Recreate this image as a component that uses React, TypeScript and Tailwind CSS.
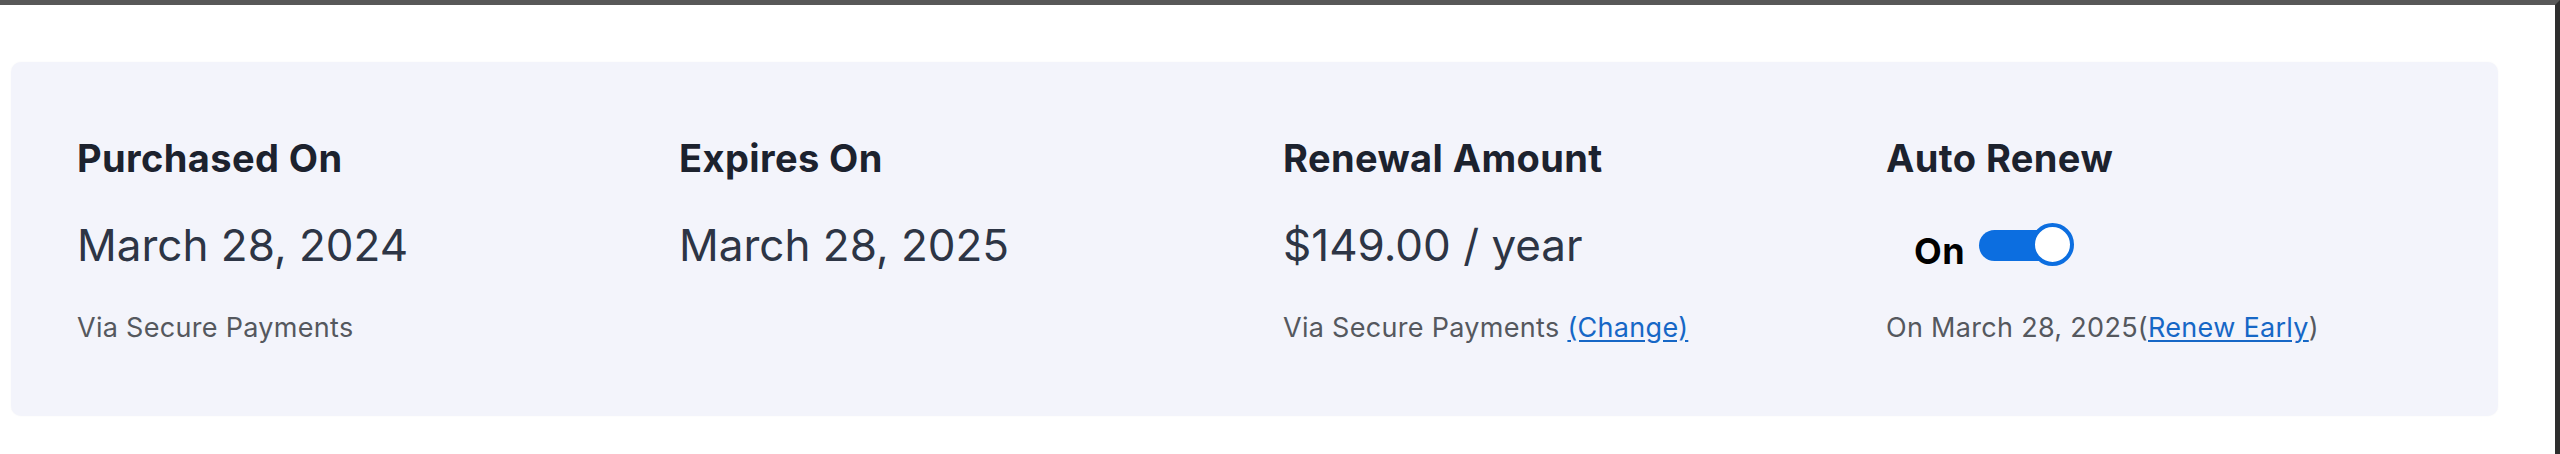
import React from "react";

const font = { fontFamily: "Inter, 'Noto Sans', sans-serif" };

function Heading({ children }: { children: React.ReactNode }) {
  return (
    <div className="text-[38px] leading-[38px] font-bold tracking-[0.4px] text-[#1c222e]">{children}</div>
  );
}

function Value({ children }: { children: React.ReactNode }) {
  return (
    <div className="mt-[46px] text-[44px] leading-[44px] font-normal text-[#2d3545]">{children}</div>
  );
}

function Sub({ children }: { children: React.ReactNode }) {
  return (
    <div className="mt-[47px] text-[27px] leading-[27px] tracking-[0.3px] text-[#55585e]">{children}</div>
  );
}

function Toggle() {
  return (
    <div className="relative h-[31px] w-[85px] rounded-full bg-[#0c6ee0]">
      <div className="absolute right-[-10px] top-[-7px] h-[43px] w-[43px] rounded-full border-[4px] border-[#0c6ee0] bg-white" />
    </div>
  );
}

export default function App() {
  return (
    <div
      className="h-[454px] w-full bg-white border-t-[5px] border-t-[#585858] border-r-[5px] border-r-[#2e2e2e]"
      style={font}
    >
      <div className="ml-[11px] mr-[57px] mt-[57px] rounded-[10px] bg-[#f3f4fb] pl-[66px] pt-[77px] pb-[75px] shadow-[0_0_2px_rgba(0,0,0,0.04)]">
        <div className="grid grid-cols-[602px_604px_603px_1fr]">
          <div>
            <Heading>Purchased On</Heading>
            <Value>March 28, 2024</Value>
            <Sub>Via Secure Payments</Sub>
          </div>
          <div>
            <Heading>Expires On</Heading>
            <Value>March 28, 2025</Value>
          </div>
          <div>
            <Heading>Renewal Amount</Heading>
            <Value>$149.00 / year</Value>
            <Sub>
              Via Secure Payments{" "}
              <a href="#" className="text-[#1667c6] underline underline-offset-[3px]">
                (Change)
              </a>
            </Sub>
          </div>
          <div>
            <Heading>Auto Renew</Heading>
            <div className="mt-[46px] flex h-[44px] items-end pl-[28px]">
              <span className="mb-[-2px] text-[36px] leading-[36px] font-bold tracking-[0.6px] text-black">On</span>
              <div className="mb-[6px] ml-[14px]">
                <Toggle />
              </div>
            </div>
            <Sub>
              On March 28, 2025(
              <a href="#" className="text-[#1667c6] underline underline-offset-[3px]">
                Renew Early
              </a>
              )
            </Sub>
          </div>
        </div>
      </div>
    </div>
  );
}
